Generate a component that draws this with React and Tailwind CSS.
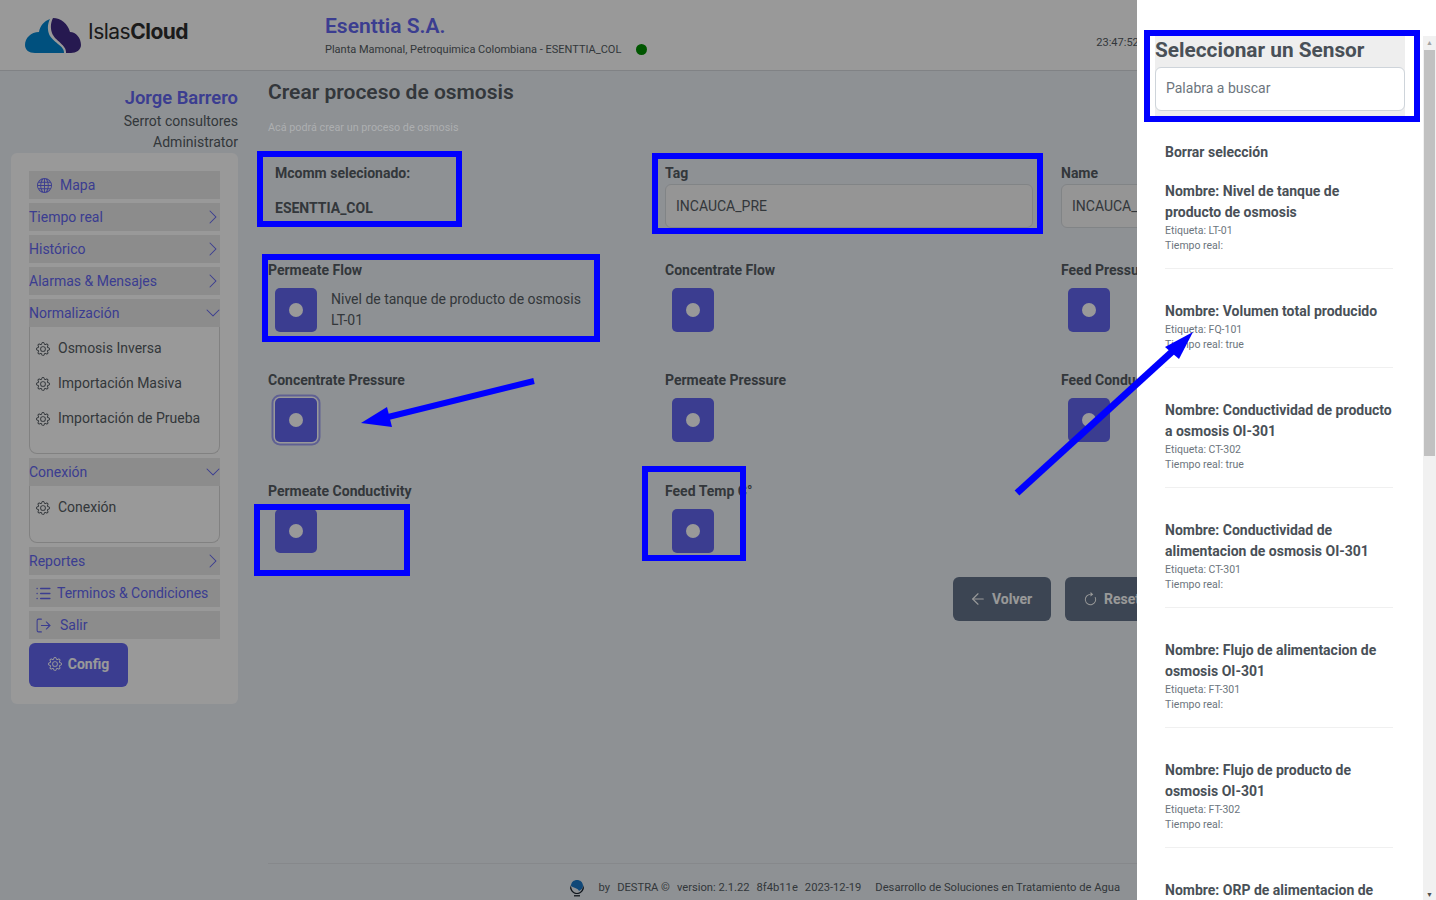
import { BsGlobe, BsChevronRight, BsChevronDown, BsGear, BsArrowClockwise } from 'react-icons/bs';
import { ArrowLeft, List, LogOut } from 'lucide-react';

const sensors = [
  { name: 'Nivel de tanque de producto de osmosis', tag: 'LT-01', live: '' },
  { name: 'Volumen total producido', tag: 'FQ-101', live: 'true' },
  { name: 'Conductividad de producto a osmosis OI-301', tag: 'CT-302', live: 'true' },
  { name: 'Conductividad de alimentacion de osmosis OI-301', tag: 'CT-301', live: '' },
  { name: 'Flujo de alimentacion de osmosis OI-301', tag: 'FT-301', live: '' },
  { name: 'Flujo de producto de osmosis OI-301', tag: 'FT-302', live: '' },
  { name: 'ORP de alimentacion de osmosis OI-301', tag: 'ORP-301', live: '' },
];

function Logo() {
  return (
    <svg width="56" height="35" viewBox="0 0 56 35" className="shrink-0">
      <path
        d="M25 1C19 3 15 8 14 14C6 14 0 20 0 27C0 32 4 35 10 35L39 35C40 28 27 24 24 16C22 10 23 5 25 1Z"
        fill="#0085d2"
      />
      <path
        d="M28 0C36 0 43 6 45 14C51 14 56 20 56 27C56 32 51 35 46 35L41 35C42 27 30 23 27 15C25 9 26 4 28 0Z"
        fill="#402b85"
      />
    </svg>
  );
}

function MenuRow({ label, open }) {
  return (
    <div className="flex h-[28px] items-center justify-between bg-[#e9e9e9] text-[#6366f1]">
      <span>{label}</span>
      {open ? <BsChevronDown className="-mr-[1px] text-[16px]" /> : <BsChevronRight className="-mr-[1px] text-[16px]" />}
    </div>
  );
}

function IconRow({ icon, label, gap }) {
  return (
    <div className={`flex h-[28px] items-center bg-[#e9e9e9] pl-[6px] text-[#6366f1] ${gap}`}>
      {icon}
      <span>{label}</span>
    </div>
  );
}

function SubMenu({ items, height }) {
  return (
    <div className={`rounded-b-[8px] border border-t-0 border-[#d8d8d8] pl-[6px] pt-[4px] text-[#555c63] ${height}`}>
      {items.map((item) => (
        <div key={item} className="flex h-[35px] items-center gap-[8px]">
          <BsGear className="text-[14px]" />
          <span>{item}</span>
        </div>
      ))}
    </div>
  );
}

function Sidebar() {
  return (
    <aside className="w-[238px] shrink-0 pt-[14px] text-right">
      <div className="text-[18.4px] leading-[26px] font-semibold text-[#6366f1]">Jorge Barrero</div>
      <div className="leading-[21px] text-[#555c63]">Serrot consultores</div>
      <div className="leading-[21px] text-[#555c63]">Administrator</div>
      <nav className="ml-[11px] flex h-[551px] w-[227px] flex-col gap-[4px] rounded-[6px] bg-white px-[18px] pt-[18px] text-left">
        <IconRow icon={<BsGlobe className="ml-[2px] text-[15px]" />} label="Mapa" gap="gap-[8px]" />
        <MenuRow label="Tiempo real" />
        <MenuRow label="Histórico" />
        <MenuRow label="Alarmas & Mensajes" />
        <div>
          <MenuRow label="Normalización" open />
          <SubMenu items={['Osmosis Inversa', 'Importación Masiva', 'Importación de Prueba']} height="h-[127px]" />
        </div>
        <div>
          <MenuRow label="Conexión" open />
          <SubMenu items={['Conexión']} height="h-[57px]" />
        </div>
        <MenuRow label="Reportes" />
        <IconRow icon={<List size={17} strokeWidth={2} />} label="Terminos & Condiciones" gap="gap-[5px]" />
        <IconRow icon={<LogOut size={17} strokeWidth={1.5} />} label="Salir" gap="gap-[8px]" />
        <button className="flex h-[44px] w-[99px] items-center justify-center gap-[6px] rounded-[6px] bg-[#6366f1] pb-[2px] font-bold text-white">
          <BsGear className="text-[14px]" />
          Config
        </button>
      </nav>
    </aside>
  );
}

function Radio({ focus }) {
  return (
    <div
      className={`ml-[7px] flex h-[44px] w-[42px] shrink-0 items-center justify-center rounded-[5px] bg-[#6366f1] ${
        focus ? 'shadow-[0_0_0_1.5px_#ffffff,0_0_0_3.5px_#9fa1f5]' : ''
      }`}
    >
      <div className="h-[14px] w-[14px] rounded-full bg-white" />
    </div>
  );
}

function Field({ label, focus, children }) {
  return (
    <div>
      <div className="leading-[21px] font-bold text-[#555c63]">{label}</div>
      <div className="mt-[7px] flex items-center gap-[14px]">
        <Radio focus={focus} />
        {children}
      </div>
    </div>
  );
}

function TextBox({ label, value }) {
  return (
    <div>
      <div className="leading-[21px] font-bold text-[#555c63]">{label}</div>
      <div className="flex h-[44px] items-center rounded-[6px] border border-[#d8dce0] bg-[#f8f8f8] px-[10px] text-[#555c63]">
        {value}
      </div>
    </div>
  );
}

function Main() {
  return (
    <main className="ml-[30px] w-[1150px] shrink-0 pt-[6px]">
      <h1 className="text-[21px] leading-[30px] font-semibold text-[#555c63]">Crear proceso de osmosis</h1>
      <p className="relative z-10 mt-[13px] text-[10.8px] leading-[16px] text-[#adafb1]">
        Acá podrá crear un proceso de osmosis
      </p>

      <div className="mt-[27px] grid grid-cols-[369px_368px_369px] gap-x-[28px]">
        <div className="pl-[7px] font-bold text-[#555c63]">
          <div className="leading-[21px]">Mcomm selecionado:</div>
          <div className="mt-[14px] leading-[21px]">ESENTTIA_COL</div>
        </div>
        <TextBox label="Tag" value="INCAUCA_PRE" />
        <TextBox label="Name" value="INCAUCA_PRE" />
      </div>

      <div className="mt-[32px] grid grid-cols-[369px_368px_369px] gap-x-[28px]">
        <Field label="Permeate Flow">
          <div className="leading-[21px] text-[#555c63]">
            <div>Nivel de tanque de producto de osmosis</div>
            <div>LT-01</div>
          </div>
        </Field>
        <Field label="Concentrate Flow" />
        <Field label="Feed Pressure" />
      </div>

      <div className="mt-[38px] grid grid-cols-[369px_368px_369px] gap-x-[28px]">
        <Field label="Concentrate Pressure" focus />
        <Field label="Permeate Pressure" />
        <Field label="Feed Conductivity" />
      </div>

      <div className="mt-[39px] grid grid-cols-[369px_368px_369px] gap-x-[28px]">
        <Field label="Permeate Conductivity" />
        <Field label="Feed Temp C°" />
      </div>

      <div className="mt-[24px] ml-[685px] flex gap-[14px]">
        <button className="flex h-[44px] w-[98px] items-center gap-[5px] rounded-[6px] bg-[#64748b] pl-[16px] font-bold text-white">
          <ArrowLeft size={18} strokeWidth={1.5} />
          Volver
        </button>
        <button className="flex h-[44px] w-[98px] items-center gap-[6px] rounded-[6px] bg-[#64748b] pl-[18px] font-bold text-white">
          <BsArrowClockwise className="text-[15px]" />
          Reset
        </button>
      </div>

      <footer className="mt-[242px] flex h-[37px] items-center justify-end gap-[14px] border-t border-[#dfe3e8] pr-[298px] pt-[12px] text-[11.2px] text-[#555c63]">
        <svg width="16" height="18" viewBox="0 0 16 18" className="shrink-0">
          <path d="M2 6C2 11 5 14 8 14C11 14 14 11 14 6L15 9C14 13 11 15 8 15C5 15 2 13 1 9Z" fill="#1c2530" />
          <path d="M2 7C2 3 5 1 8 1C11 1 14 3 14 7C14 9 12 11 10 12C9 9 5 9 2 7Z" fill="#1b78c8" />
          <rect x="5" y="16" width="6" height="1.5" fill="#3a4048" />
        </svg>
        <div className="flex gap-[7px]">
          <span>by</span>
          <span>DESTRA ©</span>
          <span>version: 2.1.22</span>
          <span>8f4b11e</span>
          <span className="mr-[7px]">2023-12-19</span>
          <span>Desarrollo de Soluciones en Tratamiento de Agua</span>
        </div>
      </footer>
    </main>
  );
}

function SensorPanel() {
  return (
    <div className="absolute top-0 right-0 bottom-0 z-20 flex w-[299px] bg-white pt-[36px] text-[#495057]">
      <div className="w-[286px] overflow-hidden">
        <div className="mx-[18px] h-[80px] bg-[#eeeeee]">
          <div className="text-[20.8px] leading-[29px] font-bold">Seleccionar un Sensor</div>
          <div className="mt-[2px] flex h-[44px] items-center rounded-[6px] border border-[#ced4da] bg-white px-[10px] pb-[2px] text-[#6c757d]">
            Palabra a buscar
          </div>
        </div>
        <div className="mt-[26px] w-[256px] pl-[28px]">
          <div className="leading-[21px] font-bold">Borrar selección</div>
          <div className="mt-[18px] flex flex-col gap-[32px]">
            {sensors.map((s) => (
              <div key={s.tag} className="w-[228px] border-b border-[#f0f0f0] pb-[15px]">
                <div className="leading-[21px] font-bold">Nombre: {s.name}</div>
                <div className="text-[10.5px] leading-[15px] text-[#6c757d]">Etiqueta: {s.tag}</div>
                <div className="text-[10.5px] leading-[15px] text-[#6c757d]">Tiempo real: {s.live}</div>
              </div>
            ))}
          </div>
        </div>
      </div>
      <div className="flex w-[13px] shrink-0 flex-col bg-[#f1f1f1]">
        <div className="flex h-[14px] items-center justify-center text-[7px] leading-none text-[#a3a3a3]">▲</div>
        <div className="mx-[1px] h-[406px] bg-[#c1c1c1]" />
        <div className="mt-auto flex h-[9px] items-center justify-center text-[7px] leading-none text-[#505050]">▼</div>
      </div>
    </div>
  );
}

// hand drawn marks that were on the screenshot
function Annotations() {
  const box = 'absolute z-30 border-[6px] border-[#0000ff]';
  return (
    <>
      <div className={`${box} top-[151px] left-[257px] h-[76px] w-[205px]`} />
      <div className={`${box} top-[153px] left-[652px] h-[81px] w-[391px]`} />
      <div className={`${box} top-[254px] left-[262px] h-[88px] w-[338px]`} />
      <div className={`${box} top-[504px] left-[254px] h-[72px] w-[156px]`} />
      <div className={`${box} top-[466px] left-[642px] h-[95px] w-[104px]`} />
      <div className={`${box} top-[30px] left-[1144px] h-[92px] w-[276px]`} />
      <svg className="pointer-events-none absolute inset-0 z-30" width="1436" height="900">
        <line x1="534" y1="381" x2="380" y2="419" stroke="#0000ff" strokeWidth="6" />
        <polygon points="361,423 387,407 392,427" fill="#0000ff" />
        <line x1="1017" y1="493" x2="1175" y2="349" stroke="#0000ff" strokeWidth="7" />
        <polygon points="1193,332 1165,347 1179,359" fill="#0000ff" />
      </svg>
    </>
  );
}

export default function App() {
  return (
    <div className="relative h-[900px] overflow-hidden bg-[#edf2f7] font-['Roboto',sans-serif] text-[14px]">
      <header className="flex h-[71px] items-center border-b border-[#d5d9de] bg-white">
        <div className="flex w-[325px] shrink-0 items-center gap-[7px] pl-[25px]">
          <Logo />
          <span className="mb-[6px] font-['Inter',sans-serif] text-[21px] tracking-[-0.5px] text-[#2d2d2d]">
            Islas<span className="font-bold">Cloud</span>
          </span>
        </div>
        <div className="pb-[1.5px]">
          <div className="text-[21px] leading-[30px] font-semibold text-[#6366f1]">Esenttia S.A.</div>
          <div className="mt-[1px] flex items-center gap-[15px] text-[11px] text-[#555c63]">
            <span>Planta Mamonal, Petroquimica Colombiana - ESENTTIA_COL</span>
            <span className="h-[11px] w-[11px] rounded-full bg-[#009000]" />
          </div>
        </div>
        <div className="ml-[449px] w-[100px] pt-[16px] text-[11px] text-[#555c63]">23:47:52</div>
      </header>

      <div className="flex">
        <Sidebar />
        <Main />
      </div>

      <div className="absolute inset-0 bg-black/40" />
      <SensorPanel />
      <Annotations />
    </div>
  );
}
